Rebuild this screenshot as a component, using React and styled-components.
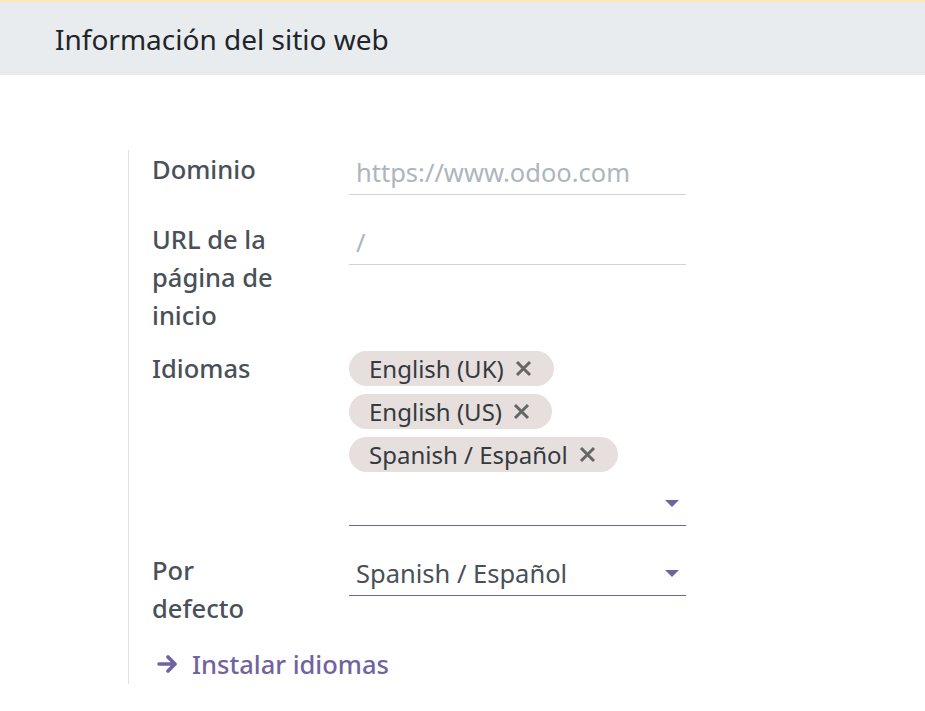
import React from "react";
import styled, { createGlobalStyle } from "styled-components";

const GlobalStyle = createGlobalStyle`
  html, body {
    margin: 0;
    padding: 0;
    background: #ffffff;
    font-family: "Noto Sans", "Open Sans", sans-serif;
  }
  * { box-sizing: border-box; }
`;

const Page = styled.div`
  width: 925px;
  min-height: 711px;
  border-top: 2px solid #fde8b6;
  background: #fff;
`;

const SectionHeader = styled.div`
  height: 73px;
  background: #e9ecef;
  display: flex;
  align-items: center;
  padding-left: 55px;
  font-size: 28px;
  color: #212529;
`;

const Body = styled.div`
  padding: 75px 0 0 128px;
`;

const Group = styled.div`
  border-left: 1px solid #dee2e6;
  padding-left: 23px;
  padding-bottom: 1px;
  width: 560px;
  display: flex;
  flex-direction: column;
  gap: 15px;
`;

const Row = styled.div`
  display: grid;
  grid-template-columns: 197px 337px;
  align-items: start;
`;

const Label = styled.label`
  max-width: 135px;
  font-size: 25.5px;
  line-height: 38px;
  color: #495057;
  font-weight: 500;
`;

const Field = styled.div`
  padding-bottom: 10px;
`;

const Input = styled.div`
  height: 45px;
  margin-top: ${(p) => p.$top || 0}px;
  border-bottom: 1px solid ${(p) => (p.$focus ? "#71639e" : "#ced4da")};
  padding: 0 7px;
  display: flex;
  align-items: center;
  justify-content: space-between;
  font-size: 25.5px;
  color: ${(p) => (p.$muted ? "#adb5bd" : "#495057")};
`;

const Tags = styled.div`
  display: flex;
  flex-direction: column;
  align-items: flex-start;
  gap: 8px;
  padding-top: 2px;
`;

const Tag = styled.span`
  display: inline-flex;
  align-items: center;
  height: 35px;
  padding: 0 22px 0 20px;
  border-radius: 18px;
  background: #e7dfdd;
  color: #343a40;
  font-size: 24px;
  overflow: hidden;
  gap: 11px;
`;

const Caret = styled.span`
  width: 0;
  height: 0;
  border-left: 7px solid transparent;
  border-right: 7px solid transparent;
  border-top: 7px solid #71639e;
`;

const Link = styled.a`
  display: inline-flex;
  align-items: center;
  gap: 13px;
  margin-top: 3px;
  padding-left: 5px;
  font-size: 25.5px;
  line-height: 38px;
  color: #71639e;
  text-decoration: none;
  font-weight: 500;
`;

function Close() {
  return (
    <svg width="17" height="17" viewBox="0 0 17 17">
      <path d="M2 2 L15 15 M15 2 L2 15" stroke="#666" strokeWidth="3" />
    </svg>
  );
}

function Arrow() {
  return (
    <svg width="22" height="18" viewBox="0 0 22 18">
      <path d="M2 9 H18 M11 2 L18 9 L11 16" stroke="#71639e" strokeWidth="3.6" fill="none" strokeLinecap="round" strokeLinejoin="round" />
    </svg>
  );
}

export default function App() {
  return (
    <Page>
      <GlobalStyle />
      <SectionHeader>Información del sitio web</SectionHeader>
      <Body>
        <Group>
          <Row>
            <Label>Dominio</Label>
            <Field>
              <Input $muted>https://www.odoo.com</Input>
            </Field>
          </Row>
          <Row>
            <Label>URL de la página de inicio</Label>
            <Field>
              <Input $muted>/</Input>
            </Field>
          </Row>
          <Row>
            <Label>Idiomas</Label>
            <Field>
              <Tags>
                <Tag>English (UK) <Close /></Tag>
                <Tag>English (US) <Close /></Tag>
                <Tag>Spanish / Español <Close /></Tag>
              </Tags>
              <Input $focus $top={9}>
                <span />
                <Caret />
              </Input>
            </Field>
          </Row>
          <Row>
            <Label>Por defecto</Label>
            <Field>
              <Input $focus>
                Spanish / Español
                <Caret />
              </Input>
            </Field>
          </Row>
          <Link href="#">
            <Arrow />
            Instalar idiomas
          </Link>
        </Group>
      </Body>
    </Page>
  );
}
